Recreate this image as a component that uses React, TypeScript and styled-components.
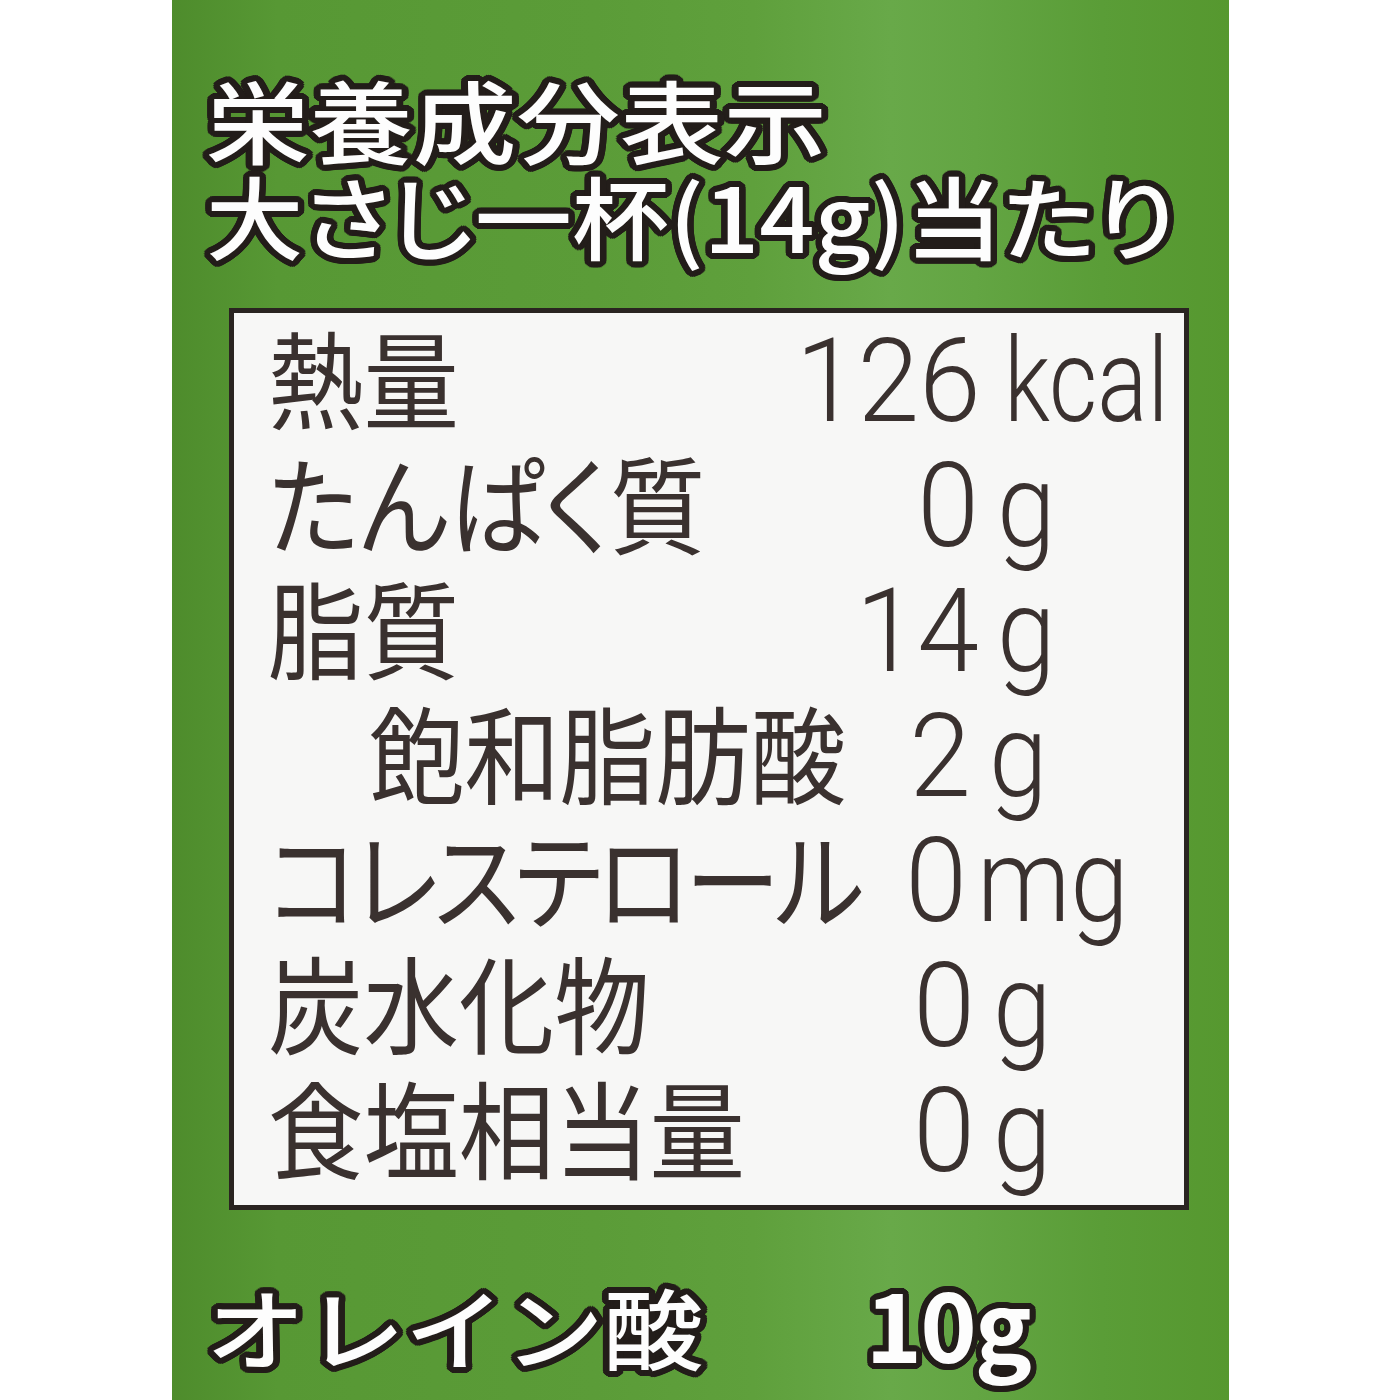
import React, { FC } from "react";
import styled, { createGlobalStyle } from "styled-components";

const GlobalStyle = createGlobalStyle`
  html, body {
    margin: 0;
    padding: 0;
    background: #ffffff;
  }
`;

// ring of shadows to imitate the thick dark outline round the white print
const outline = (r: number, color: string) => {
  const parts: string[] = [];
  for (let a = 0; a < 360; a += 15) {
    const x = (Math.cos((a * Math.PI) / 180) * r).toFixed(1);
    const y = (Math.sin((a * Math.PI) / 180) * r).toFixed(1);
    parts.push(`${x}px ${y}px 0 ${color}`);
  }
  return parts.join(", ");
};

const OUTLINE = [outline(6, "#231d1a"), outline(3.5, "#231d1a")].join(", ");

const Panel = styled.div`
  width: 1057px;
  height: 1400px;
  margin: 0 auto;
  box-sizing: border-box;
  padding: 70px 40px 0 34px;
  display: flex;
  flex-direction: column;
  overflow: hidden;
  background: linear-gradient(
    90deg,
    #4e8c2c 0%,
    #579834 10%,
    #5b9c38 40%,
    #5fa03c 55%,
    #68a949 68%,
    #63a543 76%,
    #5a9d37 88%,
    #56982f 100%
  );
  font-family: "Noto Sans CJK JP", "Noto Sans", sans-serif;
`;

const Title = styled.div`
  height: 96px;
  color: #fdfdfd;
  font-size: 90px;
  line-height: 96px;
  font-weight: 500;
  white-space: nowrap;
  text-shadow: ${OUTLINE};
`;

const Stretch = styled.span<{ $sx: number; $palt?: boolean }>`
  display: inline-block;
  transform: scaleX(${(p) => p.$sx});
  transform-origin: left center;
  font-feature-settings: ${(p) => (p.$palt ? '"palt"' : "normal")};
`;

const Table = styled.div`
  margin: 46px 0 0 23px;
  width: 960px;
  box-sizing: border-box;
  border: 5px solid #2a2421;
  background: #f7f7f6;
  padding: 0 0 17px 34px;
  display: flex;
  flex-direction: column;
`;

const Row = styled.div`
  display: flex;
  align-items: baseline;
  height: 125px;
  line-height: 125px;
  color: #3a312f;
`;

const Label = styled.div<{ $indent?: boolean }>`
  flex: 1;
  min-width: 0;
  font-size: 106px;
  font-weight: 400;
  white-space: nowrap;
  padding-left: ${(p) => (p.$indent ? "101px" : "0")};
`;

const LabelText = styled.span<{ $tight?: boolean }>`
  display: inline-block;
  transform: scaleX(0.9);
  transform-origin: left center;
  font-feature-settings: "palt";
  letter-spacing: ${(p) => (p.$tight ? "-5px" : "0")};
`;

const Value = styled.div<{ $dx: number }>`
  flex-shrink: 0;
  display: flex;
  align-items: baseline;
  width: 410px;
  transform: translateX(${(p) => p.$dx}px);
  font-family: Roboto, "Liberation Sans", sans-serif;
  font-weight: 300;
  font-size: 117px;
`;

const Num = styled.span`
  width: 205px;
  display: inline-block;
  text-align: right;
  transform: scaleX(0.95);
  transform-origin: right center;
`;

const Unit = styled.span<{ $gap: number; $sx: number }>`
  display: inline-block;
  margin-left: ${(p) => p.$gap}px;
  transform: scaleX(${(p) => p.$sx});
  transform-origin: left center;
  white-space: nowrap;
`;

const Footer = styled.div`
  margin-top: 64px;
  display: flex;
  align-items: baseline;
  color: #fdfdfd;
  font-size: 88px;
  line-height: 96px;
  font-weight: 500;
  text-shadow: ${OUTLINE};
  white-space: nowrap;
`;

const FooterLabel = styled.div`
  width: 660px;
  flex-shrink: 0;
`;

const FooterValue = styled.div`
  font-weight: 700;
  font-size: 96px;
  letter-spacing: -2px;
`;

interface Item {
  label: string;
  num: string;
  unit: string;
  indent?: boolean;
  tight?: boolean;
  dx?: number;
  gap?: number;
  sx?: number;
}

const items: Item[] = [
  { label: "熱量", num: "126", unit: "kcal", dx: 12, gap: 24, sx: 0.8 },
  { label: "たんぱく質", num: "0", unit: "g" },
  { label: "脂質", num: "14", unit: "g" },
  { label: "飽和脂肪酸", num: "2", unit: "g", indent: true, dx: -8 },
  { label: "コレステロール", num: "0", unit: "mg", tight: true, dx: -12, gap: 10 },
  { label: "炭水化物", num: "0", unit: "g", dx: -4 },
  { label: "食塩相当量", num: "0", unit: "g", dx: -4 },
];

const App: FC = () => {
  return (
    <>
      <GlobalStyle />
      <Panel>
        <Title>
          <Stretch $sx={1.15}>栄養成分表示</Stretch>
        </Title>
        <Title>
          <Stretch $sx={1.08} $palt>
            大さじ一杯(14g)当たり
          </Stretch>
        </Title>
        <Table>
          {items.map((it) => (
            <Row key={it.label}>
              <Label $indent={it.indent}>
                <LabelText $tight={it.tight}>{it.label}</LabelText>
              </Label>
              <Value $dx={it.dx ?? 0}>
                <Num>{it.num}</Num>
                <Unit $gap={it.gap ?? 18} $sx={it.sx ?? 0.9}>
                  {it.unit}
                </Unit>
              </Value>
            </Row>
          ))}
        </Table>
        <Footer>
          <FooterLabel>
            <Stretch $sx={1.13}>オレイン酸</Stretch>
          </FooterLabel>
          <FooterValue>10g</FooterValue>
        </Footer>
      </Panel>
    </>
  );
};

export default App;
